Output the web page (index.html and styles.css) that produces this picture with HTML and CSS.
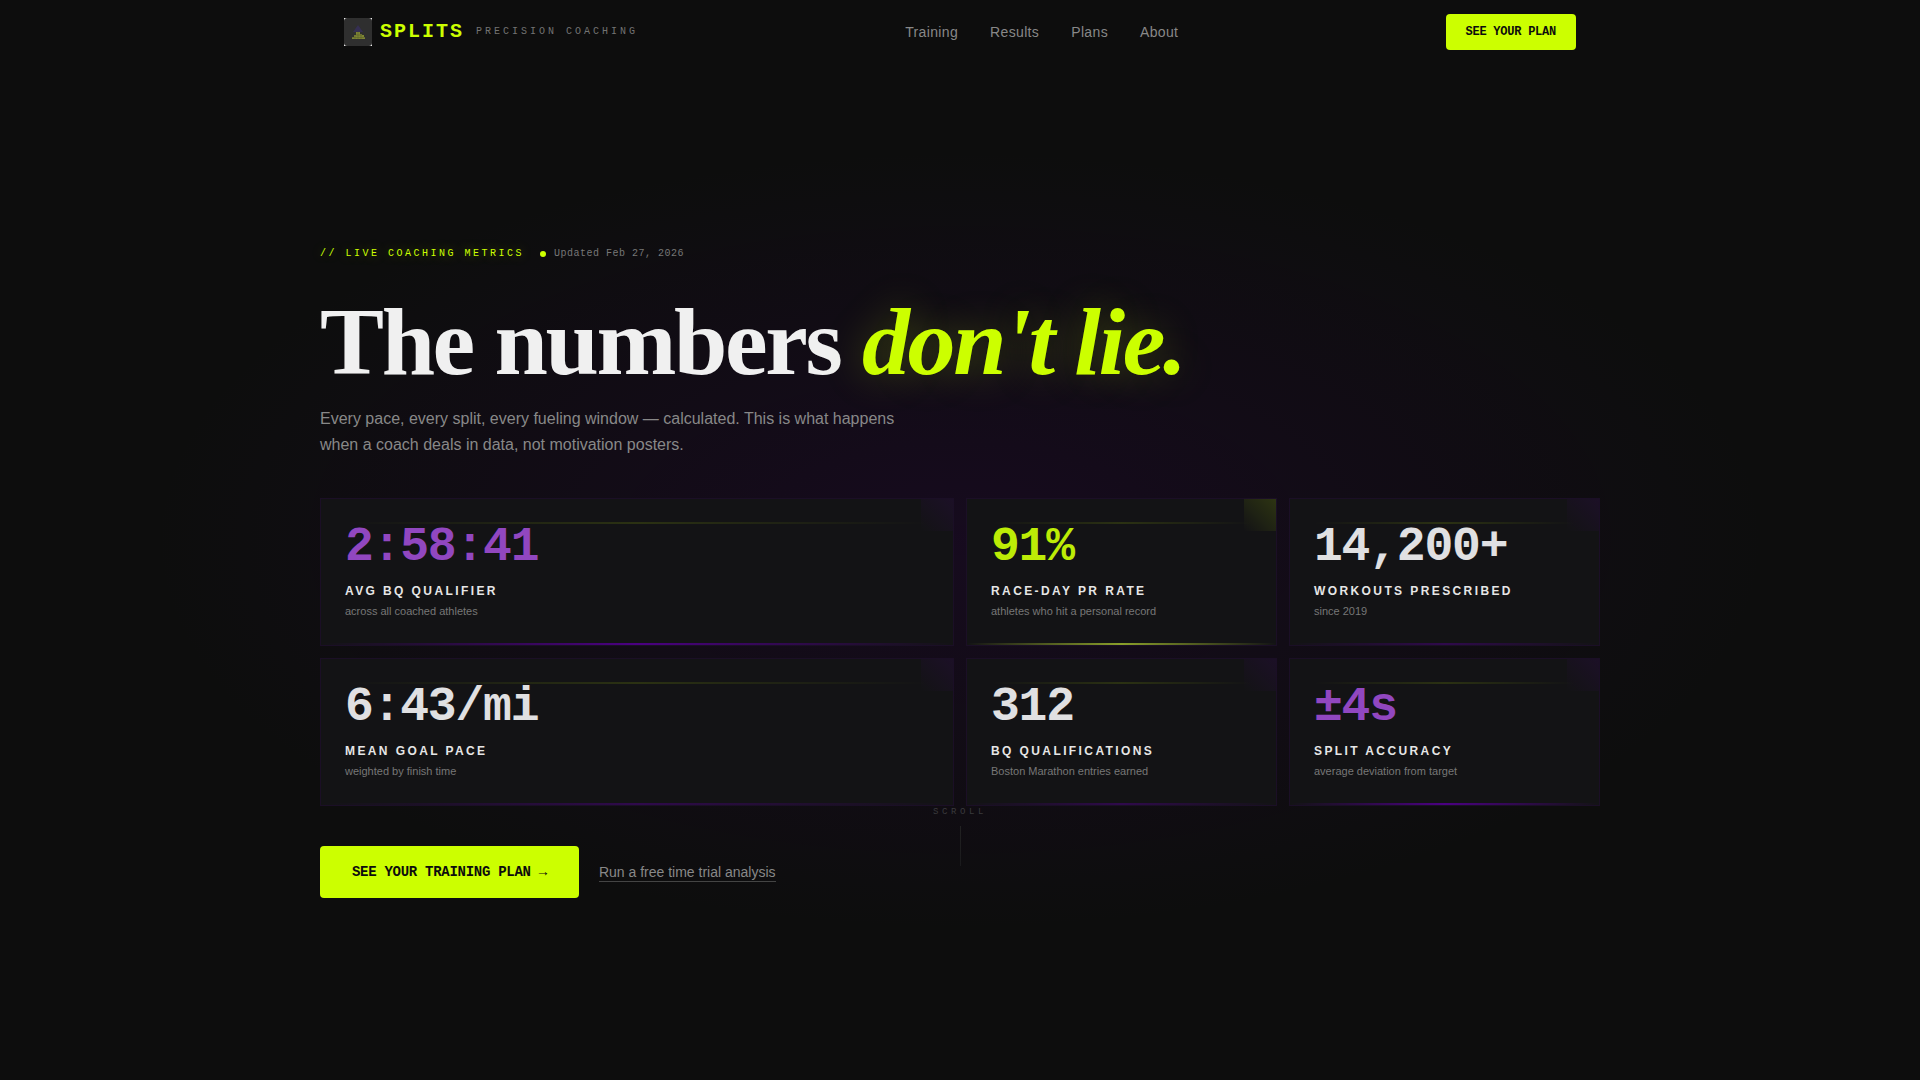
FILE: index.html
```html
<!DOCTYPE html>
<html lang="en">
<head>
  <meta charset="UTF-8">
  <meta name="viewport" content="width=device-width, initial-scale=1.0">
  <title>SPLITS | Precision Coaching</title>
  <link rel="stylesheet" href="styles.css">
</head>
<body>
  <header class="nav">
    <div class="nav-inner">
      <a href="#" class="brand">
        <svg class="brand-mark" viewBox="0 0 28 28" aria-hidden="true">
          <rect width="28" height="28" fill="#fff"/>
          <rect width="28" height="28" rx="3" fill="#2f2f2f"/>
          <path d="M14 7l5 7H9z" fill="#352f52"/>
          <path d="M8 19h2v-2h2v-3h4v2h2v1h2v2h1v2H8z" fill="#7d8433"/>
          <path d="M8 19.500h13M12 17h6M14 14v7M17 16v5M11 17v4" stroke="#565b2c" stroke-width=".5"/>
        </svg>
        <span class="brand-name">SPLITS</span>
        <span class="brand-tag">PRECISION COACHING</span>
      </a>
      <nav class="nav-links">
        <a href="#training">Training</a>
        <a href="#results">Results</a>
        <a href="#plans">Plans</a>
        <a href="#about">About</a>
      </nav>
      <button type="button" class="btn btn-small">SEE YOUR PLAN</button>
    </div>
  </header>

  <main class="hero">
    <div class="hero-inner">
      <div class="eyebrow">
        <span class="eyebrow-label">// LIVE COACHING METRICS</span>
        <span class="updated"><i class="dot"></i>Updated Feb 27, 2026</span>
      </div>
      <h1>The numbers <em>don't lie.</em></h1>
      <p class="lead">Every pace, every split, every fueling window — calculated. This is what happens when a coach deals in data, not motivation posters.</p>

      <section class="stats">
        <article class="card wide violet">
          <div class="value">2:58:41</div>
          <div class="label">AVG BQ QUALIFIER</div>
          <div class="sub">across all coached athletes</div>
        </article>
        <article class="card volt">
          <div class="value">91%</div>
          <div class="label">RACE-DAY PR RATE</div>
          <div class="sub">athletes who hit a personal record</div>
        </article>
        <article class="card">
          <div class="value">14,200+</div>
          <div class="label">WORKOUTS PRESCRIBED</div>
          <div class="sub">since 2019</div>
        </article>
        <article class="card wide">
          <div class="value">6:43/mi</div>
          <div class="label">MEAN GOAL PACE</div>
          <div class="sub">weighted by finish time</div>
        </article>
        <article class="card">
          <div class="value">312</div>
          <div class="label">BQ QUALIFICATIONS</div>
          <div class="sub">Boston Marathon entries earned</div>
        </article>
        <article class="card violet">
          <div class="value">±4s</div>
          <div class="label">SPLIT ACCURACY</div>
          <div class="sub">average deviation from target</div>
        </article>
      </section>

      <div class="actions">
        <button type="button" class="btn btn-large">SEE YOUR TRAINING PLAN →</button>
        <a href="#trial" class="text-link">Run a free time trial analysis</a>
        <div class="scroll">SCROLL</div>
      </div>
    </div>
  </main>
</body>
</html>
```
FILE: styles.css
```css
:root {
  --bg: #0d0d0d;
  --volt: #ccff00;
  --violet: #9147c0;
  --muted: #888;
  --mono: "Liberation Mono", monospace;
  --sans: "Liberation Sans", Arial, sans-serif;
  --serif: "Liberation Serif", Georgia, serif;
}
* {
  box-sizing: border-box;
  margin: 0;
  padding: 0;
}
body {
  display: flex;
  flex-direction: column;
  min-height: 100vh;
  background: var(--bg);
  background-image: radial-gradient(ellipse 42% 36% at 50% 50%, rgba(60, 0, 100, 0.2), transparent);
  color: #f0f0f0;
  font-family: var(--sans);
}
a {
  color: inherit;
  text-decoration: none;
}

/* nav */
.nav-inner {
  display: flex;
  justify-content: space-between;
  align-items: center;
  max-width: 1280px;
  height: 64px;
  margin: 0 auto;
  padding: 0 24px;
}
.brand {
  display: flex;
  align-items: center;
  gap: 8px;
}
.brand-mark {
  width: 28px;
  height: 28px;
}
.brand-name {
  color: var(--volt);
  font: bold 20px/24px var(--mono);
  letter-spacing: 0.1em;
}
.brand-tag {
  margin-left: 4px;
  color: #737373;
  font: 10px/16px var(--mono);
  letter-spacing: 0.3em;
}
.nav-links {
  display: flex;
  gap: 32px;
  color: var(--muted);
  font-size: 14px;
  letter-spacing: 0.025em;
}
.btn {
  border: none;
  border-radius: 4px;
  background: var(--volt);
  color: var(--bg);
  font-family: var(--mono);
  font-weight: bold;
  letter-spacing: -0.02em;
  cursor: pointer;
}
.btn-small {
  height: 36px;
  padding: 0 20px;
  font-size: 12px;
}
.btn-large {
  height: 52px;
  padding: 0 32px;
  font-size: 14px;
}

/* hero */
.hero {
  display: flex;
  flex: 1;
  align-items: center;
}
.hero-inner {
  width: 100%;
  max-width: 1280px;
  margin: 0 auto;
}
.eyebrow {
  display: flex;
  align-items: center;
  gap: 16px;
  margin-bottom: 32px;
  font: 10px/16px var(--mono);
}
.eyebrow-label {
  color: var(--volt);
  letter-spacing: 0.25em;
  text-shadow: 0 0 12px rgba(204, 255, 0, 0.4);
}
.updated {
  display: flex;
  align-items: center;
  gap: 8px;
  color: #777;
  letter-spacing: 0.05em;
}
.dot {
  width: 6px;
  height: 6px;
  border-radius: 50%;
  background: var(--volt);
}
h1 {
  margin-bottom: 16px;
  font: bold 96px/96px var(--serif);
  letter-spacing: -0.025em;
}
h1 em {
  color: var(--volt);
  text-shadow: 0 0 40px rgba(204, 255, 0, 0.25);
}
.lead {
  max-width: 600px;
  margin-bottom: 40px;
  color: var(--muted);
  font-size: 16px;
  line-height: 26px;
}

/* stat cards */
.stats {
  display: grid;
  grid-template-columns: repeat(4, 1fr);
  gap: 12px;
}
.card {
  --line: rgba(75, 0, 130, 0.5);
  --corner: rgba(75, 0, 130, 0.16);
  position: relative;
  padding: 24px 24px 26px;
  border: 1px solid #1b0f26;
  background: #131315;
}
.card.wide {
  grid-column: span 2;
}
.card.violet {
  --line: #4b0082;
}
.card.volt {
  --line: #8a9f2a;
  --corner: rgba(204, 255, 0, 0.14);
}
.card::before {
  content: "";
  position: absolute;
  top: 0;
  right: 0;
  width: 32px;
  height: 32px;
  background: linear-gradient(225deg, var(--corner), transparent);
}
.card::after {
  content: "";
  position: absolute;
  right: 0;
  bottom: 0;
  left: 0;
  height: 2px;
  background: linear-gradient(90deg, transparent, var(--line), transparent);
}
.value {
  position: relative;
  color: #e0e0e2;
  font: bold 48px/48px var(--mono);
  letter-spacing: -0.025em;
}
.value::before {
  content: "";
  position: absolute;
  top: -1px;
  right: 0;
  left: 0;
  height: 2px;
  background: linear-gradient(90deg, transparent, rgba(204, 255, 0, 0.13), transparent);
}
.violet .value {
  color: var(--violet);
}
.volt .value {
  color: #bdec06;
}
.label {
  margin-top: 12px;
  color: #e6e6e6;
  font-size: 12px;
  font-weight: bold;
  line-height: 16px;
  letter-spacing: 0.2em;
}
.sub {
  margin-top: 4px;
  color: #777;
  font-size: 11px;
  line-height: 16px;
}

/* actions */
.actions {
  display: flex;
  position: relative;
  align-items: center;
  gap: 20px;
  margin-top: 40px;
}
.text-link {
  border-bottom: 1px solid #444;
  color: var(--muted);
  font-size: 14px;
  line-height: 18px;
}
.scroll {
  display: flex;
  position: absolute;
  bottom: 32px;
  left: 50%;
  flex-direction: column;
  align-items: center;
  gap: 8px;
  transform: translateX(-50%);
  color: #3a3a3d;
  font: 9px/12px var(--mono);
  letter-spacing: 0.4em;
}
.scroll::after {
  content: "";
  width: 1px;
  height: 40px;
  background: linear-gradient(#222, #1a1a1c);
}
```
